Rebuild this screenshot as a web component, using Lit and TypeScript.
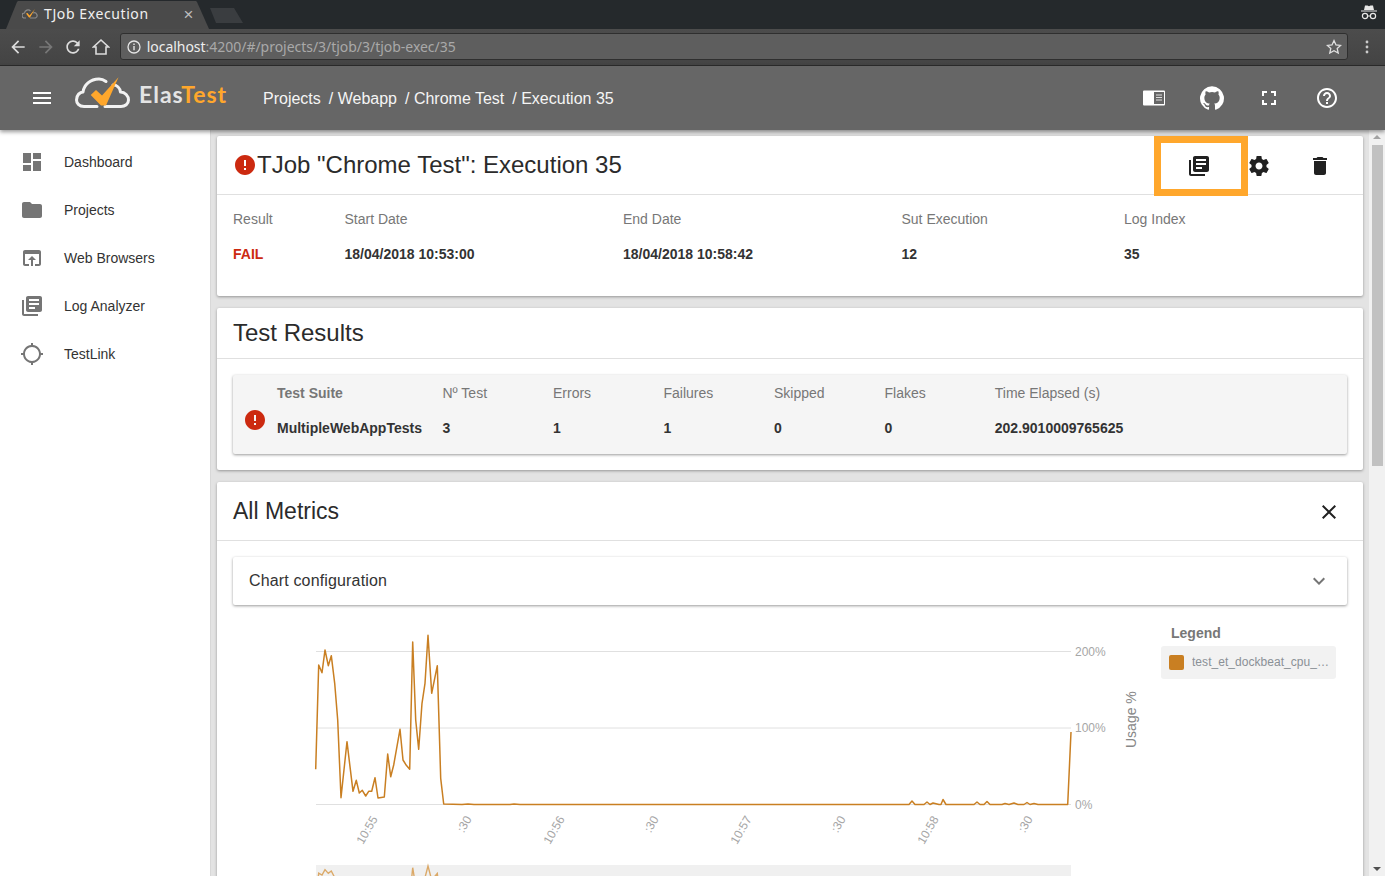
import { LitElement, html, css, svg } from "lit";
import { customElement } from "lit/decorators.js";

const P = {
  menu: "M3 18h18v-2H3v2zm0-5h18v-2H3v2zm0-7v2h18V6H3z",
  dashboard: "M3 13h8V3H3v10zm0 8h8v-6H3v6zm10 0h8V11h-8v10zm0-18v6h8V3h-8z",
  folder: "M10 4H4c-1.1 0-1.99.9-1.99 2L2 18c0 1.1.9 2 2 2h16c1.1 0 2-.9 2-2V8c0-1.1-.9-2-2-2h-8l-2-2z",
  browser: "M19 4H5c-1.11 0-2 .9-2 2v12c0 1.1.89 2 2 2h4v-2H5V8h14v10h-4v2h4c1.1 0 2-.9 2-2V6c0-1.1-.89-2-2-2zm-7 6l-4 4h3v6h2v-6h3l-4-4z",
  library: "M4 6H2v14c0 1.1.9 2 2 2h14v-2H4V6zm16-4H8c-1.1 0-2 .9-2 2v12c0 1.1.9 2 2 2h12c1.1 0 2-.9 2-2V4c0-1.1-.9-2-2-2zm-1 9H9V9h10v2zm-4 4H9v-2h6v2zm4-8H9V5h10v2z",
  gps: "M20.94 11c-.46-4.17-3.77-7.48-7.94-7.94V1h-2v2.06C6.83 3.52 3.52 6.83 3.06 11H1v2h2.06c.46 4.17 3.77 7.48 7.94 7.94V23h2v-2.06c4.17-.46 7.48-3.77 7.94-7.94H23v-2h-2.06zM12 19c-3.87 0-7-3.13-7-7s3.13-7 7-7 7 3.13 7 7-3.13 7-7 7z",
  settings: "M19.43 12.98c.04-.32.07-.64.07-.98s-.03-.66-.07-.98l2.11-1.65c.19-.15.24-.42.12-.64l-2-3.46c-.12-.22-.39-.3-.61-.22l-2.49 1c-.52-.4-1.08-.73-1.69-.98l-.38-2.65C14.46 2.18 14.25 2 14 2h-4c-.25 0-.46.18-.49.42l-.38 2.65c-.61.25-1.17.59-1.69.98l-2.49-1c-.23-.09-.49 0-.61.22l-2 3.46c-.13.22-.07.49.12.64l2.11 1.65c-.04.32-.07.65-.07.98s.03.66.07.98l-2.11 1.65c-.19.15-.24.42-.12.64l2 3.46c.12.22.39.3.61.22l2.49-1c.52.4 1.08.73 1.69.98l.38 2.65c.03.24.24.42.49.42h4c.25 0 .46-.18.49-.42l.38-2.65c.61-.25 1.17-.59 1.69-.98l2.49 1c.23.09.49 0 .61-.22l2-3.46c.12-.22.07-.49-.12-.64l-2.11-1.65zM12 15.5c-1.93 0-3.5-1.57-3.5-3.5s1.57-3.5 3.5-3.5 3.5 1.57 3.5 3.5-1.57 3.5-3.5 3.5z",
  del: "M6 19c0 1.1.9 2 2 2h8c1.1 0 2-.9 2-2V7H6v12zM19 4h-3.5l-1-1h-5l-1 1H5v2h14V4z",
  full: "M7 14H5v5h5v-2H7v-3zm-2-4h2V7h3V5H5v5zm12 7h-3v2h5v-5h-2v3zM14 5v2h3v3h2V5h-5z",
  help: "M11 18h2v-2h-2v2zm1-16C6.48 2 2 6.48 2 12s4.48 10 10 10 10-4.48 10-10S17.52 2 12 2zm0 18c-4.41 0-8-3.59-8-8s3.59-8 8-8 8 3.59 8 8-3.59 8-8 8zm0-14c-2.21 0-4 1.79-4 4h2c0-1.1.9-2 2-2s2 .9 2 2c0 2-3 1.75-3 5h2c0-2.25 3-2.5 3-5 0-2.21-1.79-4-4-4z",
  error: "M12 2C6.48 2 2 6.48 2 12s4.48 10 10 10 10-4.48 10-10S17.52 2 12 2zm1 15h-2v-2h2v2zm0-4h-2V7h2v6z",
  close: "M19 6.41L17.59 5 12 10.59 6.41 5 5 6.41 10.59 12 5 17.59 6.41 19 12 13.41 17.59 19 19 17.59 13.41 12z",
  expand: "M16.59 8.59L12 13.17 7.41 8.59 6 10l6 6 6-6z",
  github: "M12 .3a12 12 0 0 0-3.8 23.38c.6.11.82-.26.82-.58v-2.04c-3.34.73-4.04-1.61-4.04-1.61-.55-1.39-1.33-1.76-1.33-1.76-1.09-.74.08-.73.08-.73 1.2.09 1.84 1.24 1.84 1.24 1.07 1.83 2.81 1.3 3.5 1 .1-.78.42-1.31.76-1.61-2.67-.3-5.47-1.33-5.47-5.93 0-1.31.47-2.38 1.24-3.22-.13-.3-.54-1.52.11-3.18 0 0 1.01-.32 3.3 1.23a11.5 11.5 0 0 1 6 0c2.29-1.55 3.3-1.23 3.3-1.23.65 1.66.24 2.88.12 3.18.77.84 1.23 1.91 1.23 3.22 0 4.61-2.8 5.62-5.48 5.92.43.37.81 1.1.81 2.22v3.29c0 .32.22.7.82.58A12 12 0 0 0 12 .3z",
  reload: "M17.65 6.35C16.2 4.9 14.21 4 12 4c-4.42 0-7.99 3.58-7.99 8s3.57 8 7.99 8c3.73 0 6.84-2.55 7.73-6h-2.08c-.82 2.33-3.04 4-5.65 4-3.31 0-6-2.69-6-6s2.69-6 6-6c1.66 0 3.14.69 4.22 1.78L13 11h7V4l-2.35 2.35z",
  back: "M20 11H7.83l5.59-5.59L12 4l-8 8 8 8 1.41-1.41L7.83 13H20v-2z",
  fwd: "M12 4l-1.41 1.41L16.17 11H4v2h12.17l-5.58 5.59L12 20l8-8z",
};

const icon = (d: string, size = 24, cls = "") =>
  html`<svg class="ic ${cls}" width=${size} height=${size} viewBox="0 0 24 24"><path d=${d}></path></svg>`;

const z = [
  [47,448],[56,135],[66,158],[75,90],[85,137],[94,107],[104,190],[113,300],[123,533],[141,365],[150,440],[159,514],[169,481],[178,519],[187,511],[197,528],[206,514],[215,514],[225,473],[234,534],[253,531],[263,402],[272,470],[281,435],[300,328],[309,420],[319,436],[329,448],[338,66],[347,300],[356,388],[366,250],[375,190],[384,46],[395,220],[412,137],[422,475],[431,552],
];
const head = z.map(([x, y]) => [300 + x / 3, 620 + y / 3]);
const tail: number[][] = [
  [462,804.5],[468,804],[474,804.5],[510,804.5],[514,804],[520,804.5],[890,804.5],[909,804.5],[912,801],[915,804.5],[924,804.5],[927,802],[930,804.5],[933,803],[939,804.5],[941,804.5],[943,799.5],[946,804.5],[974,804.5],[977,802],[980,804.5],[984,804.5],[987,801.5],[990,804.5],[1002,804.5],[1005,803.5],[1009,804.5],[1014,803],[1018,804.5],[1024,804.5],[1027,802.5],[1030,804.5],[1034,803.5],[1038,804.5],[1067.7,804.5],[1071,732],
];
const all = [...head, ...tail];
const line = all.map(([x, y]) => `${x.toFixed(1)},${y.toFixed(1)}`).join(" ");
const mini = all.map(([x, y]) => `${x.toFixed(1)},${(866 + (y - 635) * 0.24).toFixed(1)}`).join(" ");

const xLabels: [number, number, string][] = [
  [378, 819, "10:55"], [472, 819, ":30"], [565, 819, "10:56"], [659, 819, ":30"],
  [752, 819, "10:57"], [846, 819, ":30"], [939, 819, "10:58"], [1033, 819, ":30"],
];

@customElement("app-root")
export class AppRoot extends LitElement {
  static styles = css`
    :host { display: block; width: 1385px; height: 876px; overflow: hidden; font-family: "Liberation Sans", Arial, sans-serif; color: #333; background: #e3e3e3; }
    * { box-sizing: border-box; }
    .ic { display: block; fill: currentColor; flex: none; }
    .tabstrip { height: 29px; background: #25292c; display: flex; align-items: flex-end; padding-left: 6px; }
    .tab { width: 203px; height: 28px; background: #4a4a4a; clip-path: polygon(0 100%, 11px 1px, 12px 0, 190px 0, 191px 1px, 203px 100%); display: flex; align-items: center; padding: 0 15px 2px 16px; color: #f0f0f0; font: 14px/1 "Noto Sans", sans-serif; letter-spacing: .6px; }
    .tab .fav { margin-right: 6px; }
    .tab .t { flex: 1; }
    .tab .x { color: #bdbdbd; font: 17px/1 "Liberation Sans", sans-serif; }
    .newtab { width: 34px; height: 15px; margin: 0 0 6px 1px; background: #3a3d40; clip-path: polygon(0 0, 24px 0, 33px 100%, 6px 100%); align-self: flex-end; }
    .grow { flex: 1; }
    .incog { color: #e8e8e8; margin: 0 7px 4px 0; align-self: center; }
    .toolbar { height: 37px; background: linear-gradient(#4c4c4c, #444); border-bottom: 1px solid #2b2b2b; display: flex; align-items: center; padding: 0 8px 1px 4px; }
    .nav { width: 27.7px; height: 24px; display: flex; align-items: center; justify-content: center; color: #dcdcdc; }
    .nav.off { color: #777; }
    .url { width: 1229px; margin-left: 5px; height: 27px; border: 1px solid #2f2f2f; border-radius: 3px; background: #5e5e5e; display: flex; align-items: center; padding: 0 5px 0 6px; font: 14px/1 "Noto Sans", sans-serif; color: #a9a9a9; letter-spacing: -.03px; }
    .url b { font-weight: 400; color: #eee; }
    .url .info { margin-right: 6px; color: #e6e6e6; }
    .dots { margin-left: 9px; width: 20px; display: flex; justify-content: center; color: #ccc; }
    .header { height: 64px; background: #666; box-shadow: 0 2px 4px rgba(0,0,0,.4); position: relative; z-index: 2; display: flex; align-items: center; padding: 0 46px 0 30px; color: #fff; }
    .logo { margin-left: 21px; flex: none; margin-bottom: 10px; }
    .brand { font: 700 23px/1 Lato, sans-serif; margin-left: 9px; letter-spacing: 1px; color: #e4e4e4; width: 86px; flex: none; padding-bottom: 7px; white-space: nowrap; }
    .brand span { color: #ffa72c; }
    .crumbs { margin-left: 38px; padding-top: 1px; font-size: 16px; display: flex; gap: 4px; color: #f5f5f5; }
    .crumbs span { margin-right: 4px; }
    .h-ic { display: flex; align-items: center; gap: 33.6px; }
    .body { display: flex; height: 746px; }
    .side { width: 211px; flex: none; background: #fff; border-right: 1px solid #d8d8d8; padding-top: 8px; }
    .item { height: 48px; display: flex; align-items: center; padding-left: 20px; gap: 20px; font-size: 14px; color: #333; }
    .item .ic { color: #757575; }
    .main { flex: 1; padding: 6px 6px 0; display: flex; flex-direction: column; gap: 12px; overflow: hidden; position: relative; min-width: 0; }
    .card { background: #fff; border-radius: 2px; box-shadow: 0 1px 3px rgba(0,0,0,.35); flex: none; }
    .head { height: 59px; padding: 0 16px; border-bottom: 1px solid #e0e0e0; display: flex; align-items: center; font-size: 24px; color: #2b2b2b; }
    .err { color: #cc2a10; }
    .head .acts { margin-left: auto; display: flex; gap: 37px; padding: 1px 15px 0 0; color: #212121; }
    .head .acts .ic:first-child { margin: 0 -1px 0 1px; }
    .head.small { height: 51px; padding-bottom: 1px; }
    .head.m { height: 59px; }
    .marker { position: absolute; left: 943px; top: 6px; width: 94px; height: 60px; border: 7px solid #ffa72c; }
    .info-grid { display: grid; grid-template-columns: 111.5px 278.5px 278.5px 222.5px 1fr; padding: 16px 16px 0; height: 101px; font-size: 14px; grid-auto-rows: 19px; row-gap: 16px; align-content: start; }
    .lab { color: #777; }
    .val { font-weight: 700; color: #333; }
    .fail { color: #cc2a10; }
    .results { height: 111px; padding: 16px; }
    .table { height: 79px; background: #f5f5f5; box-shadow: 0 1px 3px rgba(0,0,0,.4); border-radius: 2px; display: grid; grid-template-columns: 44px 165.5px 110.5px 110.5px 110.5px 110.5px 110.3px 1fr; grid-template-rows: 36px 34px; font-size: 14px; align-items: center; }
    .table .lab.b { font-weight: 700; }
    .t-ic { grid-row: 1 / 3; grid-column: 1; justify-self: center; align-self: start; margin-top: 33px; }
    .metrics { height: 500px; }
    .metrics .close { margin-left: auto; margin-right: 6px; margin-top: 2px; color: #212121; }
    .mt { font-size: 23px; }
    .cfg-wrap { padding: 16px 16px 0; }
    .cfg { height: 48px; padding: 0 16px; box-shadow: 0 1px 3px rgba(0,0,0,.4); border-radius: 2px; display: flex; align-items: center; justify-content: space-between; font-size: 16px; color: #333; letter-spacing: .15px; }
    .cfg .ic { color: #757575; }
    .chart-row { display: flex; padding-left: 16px; }
    .chart { display: block; flex: none; }
    .chart text { font-family: "Liberation Sans", Arial, sans-serif; }
    .legend { margin-left: 16px; width: 175px; padding-top: 21px; }
    .legend h4 { margin: 0 0 6px 10px; font-size: 14px; line-height: 14px; font-weight: 700; color: #777; }
    .chip { height: 33px; background: #f2f2f2; border-radius: 3px; display: flex; align-items: center; padding: 0 7px 0 8px; gap: 8px; font-size: 12px; letter-spacing: .04px; color: #8a9096; }
    .sw { width: 15px; height: 15px; background: #c97f22; border-radius: 2px; flex: none; }
    .chip span { overflow: hidden; text-overflow: ellipsis; white-space: nowrap; padding-bottom: 2px; }
    .scroll { width: 16px; flex: none; background: #f1f1f1; display: flex; flex-direction: column; align-items: center; padding-top: 15px; position: relative; }
    .thumb { width: 11px; height: 321px; background: #c1c1c1; margin-left: 1px; }
    .arr { position: absolute; left: 4px; width: 0; height: 0; border-left: 4px solid transparent; border-right: 4px solid transparent; }
    .arr.up { top: 5px; border-bottom: 4px solid #a3a3a3; }
    .arr.dn { bottom: 5px; border-top: 4px solid #505050; }
  `;

  render() {
    const nav = [["Dashboard", P.dashboard], ["Projects", P.folder], ["Web Browsers", P.browser], ["Log Analyzer", P.library], ["TestLink", P.gps]];
    const info = [["Result", "FAIL"], ["Start Date", "18/04/2018 10:53:00"], ["End Date", "18/04/2018 10:58:42"], ["Sut Execution", "12"], ["Log Index", "35"]];
    const tbl = [["Test Suite", "MultipleWebAppTests"], ["Nº Test", "3"], ["Errors", "1"], ["Failures", "1"], ["Skipped", "0"], ["Flakes", "0"], ["Time Elapsed (s)", "202.9010009765625"]];
    return html`
      <div class="tabstrip">
        <div class="tab">
          <svg class="fav" width="16" height="16" viewBox="0 0 16 16"><path d="M4 12H2.500a2.500 2.500 0 0 1 0-5 3.500 3.500 0 0 1 6-2M11 7a2.500 2.500 0 0 1 2.500 5H8" fill="none" stroke="#8a8a8a" stroke-width="1.2"></path><path d="M4 7.500 5.500 7 7.500 9.500 13 3 8 11.500H7z" fill="#ffa72c"></path></svg>
          <span class="t">TJob Execution</span><span class="x">×</span>
        </div>
        <div class="newtab"></div>
        <div class="grow"></div>
        <svg class="incog" width="18" height="20" viewBox="0 0 18 20"><path d="M4 7 5 2.500h2.500L9 3.200l1.500-.7H13L14 7zM1 7.500h16v1H1z" fill="currentColor"></path><circle cx="5" cy="13" r="2.600" fill="none" stroke="currentColor" stroke-width="1.2"></circle><circle cx="13" cy="13" r="2.600" fill="none" stroke="currentColor" stroke-width="1.2"></circle><path d="M7.600 13h2.800" stroke="currentColor" stroke-width="1"></path></svg>
      </div>
      <div class="toolbar">
        <div class="nav">${icon(P.back, 20)}</div>
        <div class="nav off">${icon(P.fwd, 20)}</div>
        <div class="nav">${icon(P.reload, 20)}</div>
        <div class="nav"><svg width="18" height="18" viewBox="0 0 18 18"><path d="M9 2 1.500 9H4v7h10V9h2.500z" fill="none" stroke="#dcdcdc" stroke-width="1.6"></path></svg></div>
        <div class="url">
          <svg class="info" width="14" height="14" viewBox="0 0 14 14"><circle cx="7" cy="7" r="6" fill="none" stroke="currentColor" stroke-width="1.3"></circle><path d="M6.300 6h1.400v4.200H6.300zM6.300 3.600h1.400V5H6.300z" fill="currentColor"></path></svg>
          <b>localhost</b>:4200/#/projects/3/tjob/3/tjob-exec/35
          <div class="grow"></div>
          <svg width="16" height="16" viewBox="0 0 16 16"><path d="M8 1.600l2 4.300 4.600.5-3.400 3.100 1 4.600L8 11.800l-4.200 2.300 1-4.600L1.400 6.400 6 5.900z" fill="none" stroke="#e0e0e0" stroke-width="1.3"></path></svg>
        </div>
        <div class="dots"><svg width="4" height="14" viewBox="0 0 4 14"><circle cx="2" cy="2" r="1.400" fill="currentColor"></circle><circle cx="2" cy="7" r="1.400" fill="currentColor"></circle><circle cx="2" cy="12" r="1.400" fill="currentColor"></circle></svg></div>
      </div>
      <div class="header">
        ${icon(P.menu, 24)}
        <svg class="logo" width="55" height="32" viewBox="0 0 55 32">
          <path d="M22 29.500H9C4 29.500 1.500 26 1.500 23 1.500 18 5 15 8 15 9 8 15 2 24 2c3 0 5 1 7 2.500M38 8c4 0 7 3 7.500 7 4.500 0 8 4 8 8 0 4-3.500 6.500-7.500 6.500H30" fill="none" stroke="#f2f2f2" stroke-width="3" stroke-linecap="round" stroke-linejoin="round"></path>
          <path d="M15.700 18 21 13 27 18.500 43.500.300 31 28.500H26z" fill="#ffa72c"></path>
        </svg>
        <div class="brand">Elas<span>Test</span></div>
        <div class="crumbs"><span>Projects</span><span>/ Webapp</span><span>/ Chrome Test</span><span>/ Execution 35</span></div>
        <div class="grow"></div>
        <div class="h-ic">
          <svg width="24" height="24" viewBox="0 0 24 24"><path d="M2 4.500h20a1 1 0 0 1 1 1v13a1 1 0 0 1-1 1H2a1 1 0 0 1-1-1v-13a1 1 0 0 1 1-1z" fill="#fff"></path><path d="M12 6h10v12H12z" fill="#666"></path><path d="M14 8.500h6v1h-6zM14 11h6v1h-6zM14 13.500h6v1h-6z" fill="#ddd"></path></svg>
          ${icon(P.github, 24)}
          ${icon(P.full, 24)}
          ${icon(P.help, 24)}
        </div>
      </div>
      <div class="body">
        <nav class="side">
          ${nav.map(([t, d]) => html`<div class="item">${icon(d)}<span>${t}</span></div>`)}
        </nav>
        <main class="main">
          <section class="card">
            <div class="head">
              ${icon(P.error, 24, "err")}<span>TJob "Chrome Test": Execution 35</span>
              <div class="acts">${icon(P.library)}${icon(P.settings)}${icon(P.del)}</div>
            </div>
            <div class="info-grid">
              ${info.map(([l]) => html`<div class="lab">${l}</div>`)}
              ${info.map(([, v], i) => html`<div class="val ${i === 0 ? "fail" : ""}">${v}</div>`)}
            </div>
          </section>
          <div class="marker"></div>
          <section class="card">
            <div class="head small">Test Results</div>
            <div class="results">
              <div class="table">
                ${icon(P.error, 24, "err t-ic")}
                ${tbl.map(([l], i) => html`<div class="lab ${i === 0 ? "b" : ""}" style="grid-row:1;grid-column:${i + 2}">${l}</div>`)}
                ${tbl.map(([, v], i) => html`<div class="val" style="grid-row:2;grid-column:${i + 2}">${v}</div>`)}
              </div>
            </div>
          </section>
          <section class="card metrics">
            <div class="head m"><span class="mt">All Metrics</span> ${icon(P.close, 24, "close")}</div>
            <div class="cfg-wrap"><div class="cfg">Chart configuration ${icon(P.expand)}</div></div>
            <div class="chart-row">
              <svg class="chart" width="912" height="271" viewBox="233 605 912 271">
                ${[651.5, 728, 804.5].map((y) => svg`<line x1="316" x2="1071" y1=${y} y2=${y} stroke="#e0e0e0" stroke-width="1"></line>`)}
                <polyline points=${line} fill="none" stroke="#c97f22" stroke-width="1.5" stroke-linejoin="round"></polyline>
                ${[[1075, 656, "200%"], [1075, 732, "100%"], [1075, 809, "0%"]].map(([x, y, t]) => svg`<text x=${x} y=${y} font-size="12" fill="#a6a6a6">${t}</text>`)}
                ${xLabels.map(([x, y, t]) => svg`<text x=${x} y=${y} font-size="12" fill="#a6a6a6" text-anchor="end" transform="rotate(-60 ${x} ${y})">${t}</text>`)}
                <text x="1136" y="748" font-size="14" fill="#888" transform="rotate(-90 1136 748)">Usage %</text>
                <rect x="316" y="865" width="755" height="11" fill="#f0f0f0"></rect>
                <polyline points=${mini} fill="none" stroke="#dba968" stroke-width="1.4"></polyline>
              </svg>
              <aside class="legend">
                <h4>Legend</h4>
                <div class="chip"><div class="sw"></div><span>test_et_dockbeat_cpu_totalUsage</span></div>
              </aside>
            </div>
          </section>
        </main>
        <div class="scroll"><div class="arr up"></div><div class="thumb"></div><div class="arr dn"></div></div>
      </div>
    `;
  }
}
